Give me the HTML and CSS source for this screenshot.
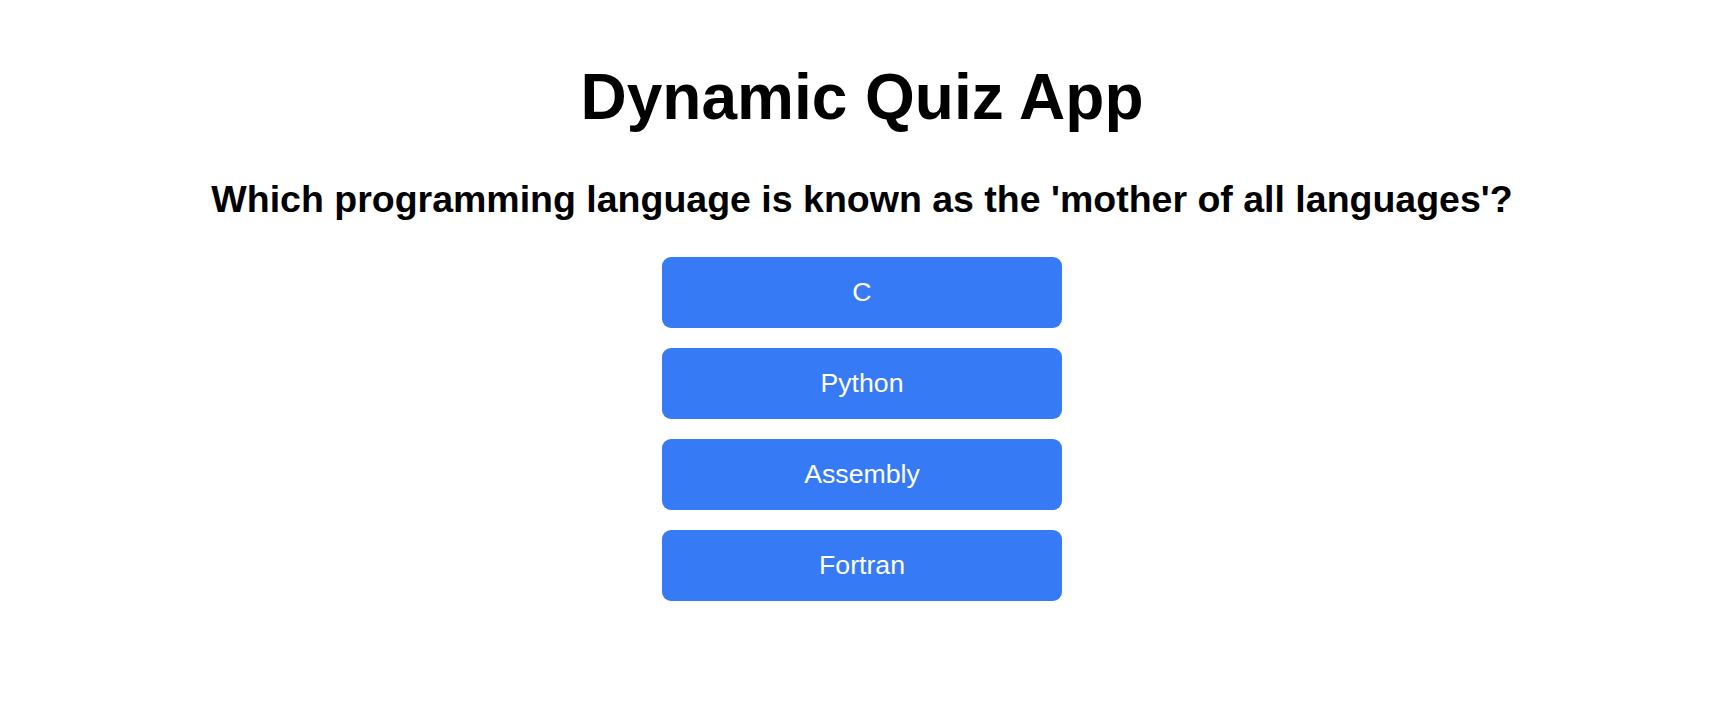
FILE: index.html
```html
<!DOCTYPE html>
<html lang="en">
<head>
<meta charset="utf-8">
<title>Dynamic Quiz App</title>
<link rel="stylesheet" href="styles.css">
</head>
<body>
<main class="quiz">
  <h1 class="quiz-title">Dynamic Quiz App</h1>
  <h2 class="quiz-question">Which programming language is known as the 'mother of all languages'?</h2>
  <div class="options">
    <button class="option">C</button>
    <button class="option">Python</button>
    <button class="option">Assembly</button>
    <button class="option">Fortran</button>
  </div>
</main>
</body>
</html>
```
FILE: styles.css
```css
html, body {
  margin: 0;
  padding: 0;
  background: #ffffff;
}
body {
  font-family: "Liberation Sans", Arial, Helvetica, sans-serif;
  color: #000000;
}
.quiz {
  display: flex;
  flex-direction: column;
  align-items: center;
  padding: 61px 0 0 4px;
}
.quiz-title {
  margin: 0;
  font-size: 64px;
  line-height: 72px;
  font-weight: 700;
  text-align: center;
}
.quiz-question {
  margin: 44px 0 0;
  font-size: 37.5px;
  line-height: 44px;
  font-weight: 700;
  text-align: center;
}
.options {
  display: flex;
  flex-direction: column;
  gap: 20px;
  margin-top: 36px;
}
.option {
  width: 400px;
  height: 71px;
  border: none;
  border-radius: 9px;
  background: #377af6;
  color: #ffffff;
  font-family: "Liberation Sans", Arial, Helvetica, sans-serif;
  font-size: 26.7px;
  padding: 0;
  cursor: pointer;
}
```
